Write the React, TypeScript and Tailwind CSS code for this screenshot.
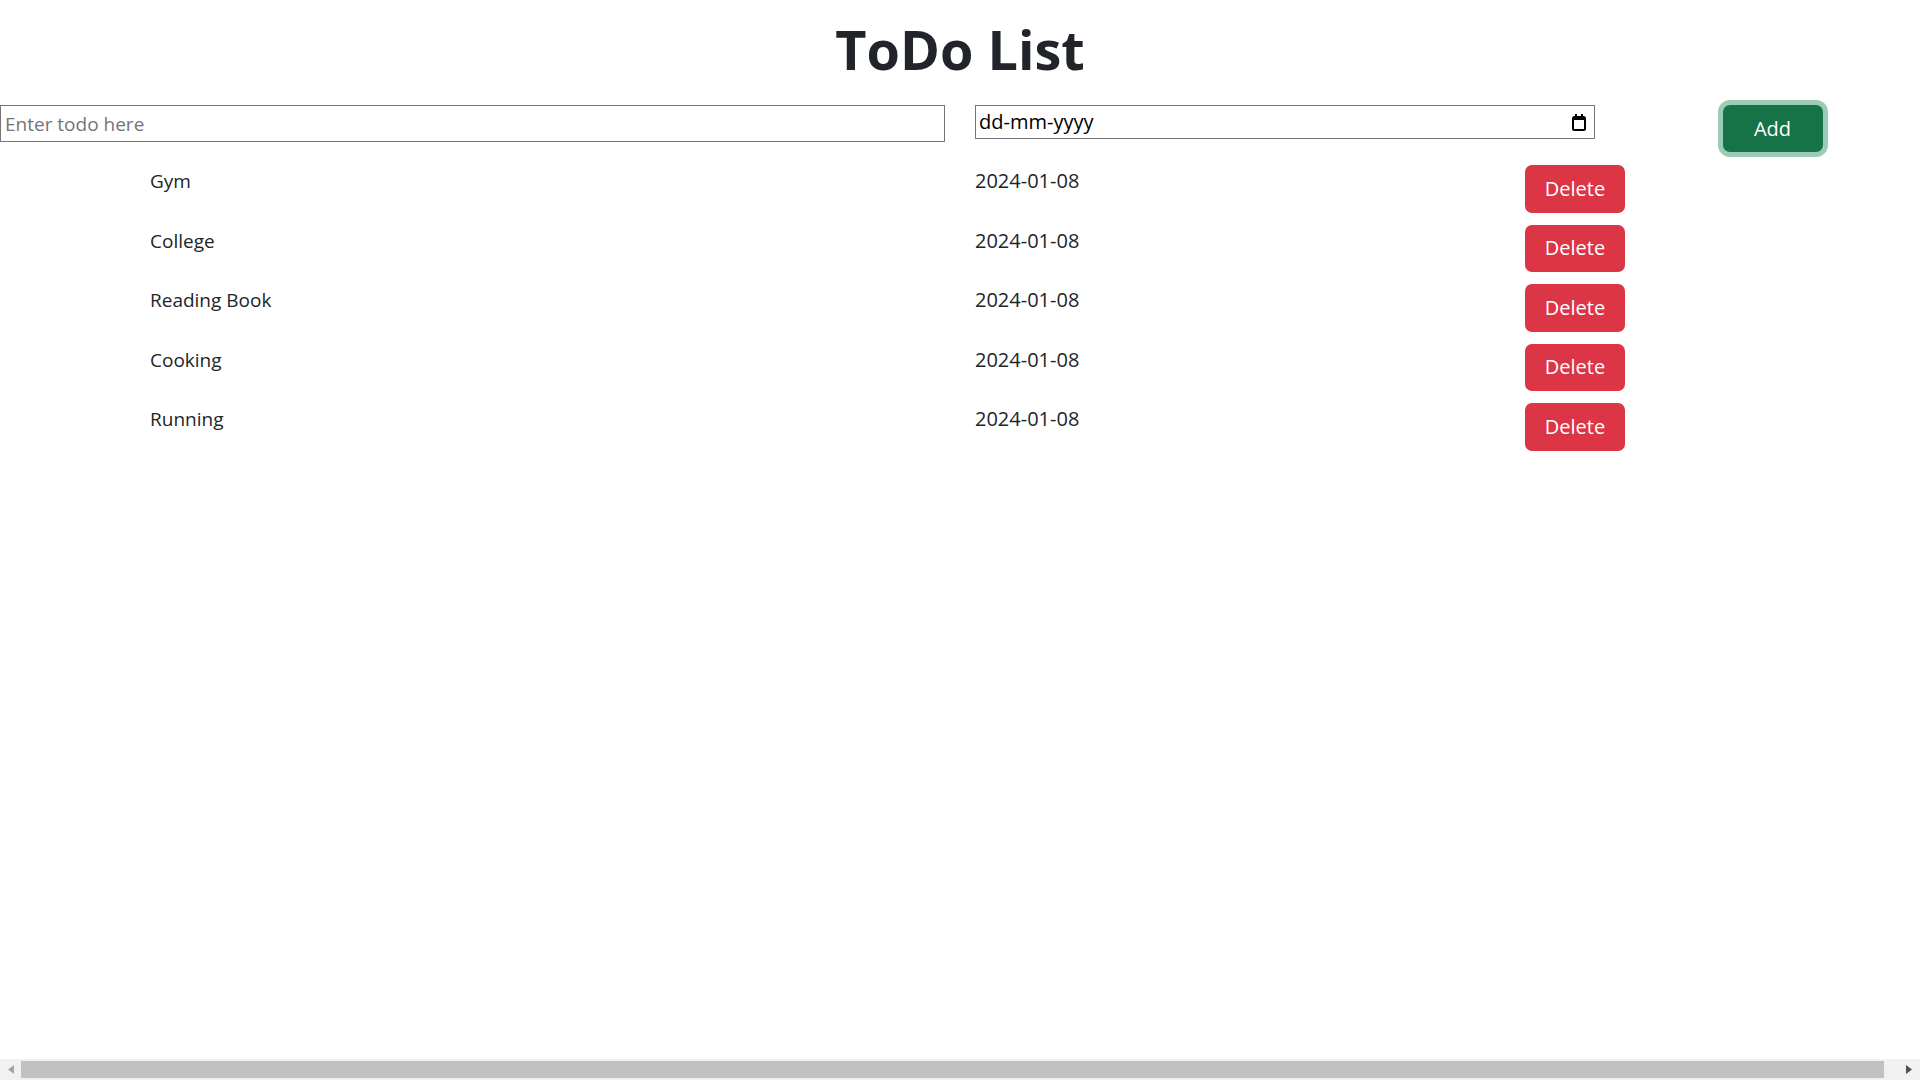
const todos = [
  { title: 'Gym', date: '2024-01-08' },
  { title: 'College', date: '2024-01-08' },
  { title: 'Reading Book', date: '2024-01-08' },
  { title: 'Cooking', date: '2024-01-08' },
  { title: 'Running', date: '2024-01-08' },
];

function CalendarIcon() {
  return (
    <svg width="14" height="17" viewBox="0 0 14 17" className="shrink-0">
      <rect x="3" y="0" width="2" height="3" fill="#000" />
      <rect x="9" y="0" width="2" height="3" fill="#000" />
      <rect x="1" y="3" width="12" height="13" rx="1.5" fill="none" stroke="#000" strokeWidth="2" />
      <rect x="1" y="3" width="12" height="3" fill="#000" />
    </svg>
  );
}

// the browser's horizontal scrollbar (page is a bit wider than the window)
function ScrollBar() {
  return (
    <div className="fixed bottom-0 left-0 right-0 h-[21px] bg-[#f1f1f1] flex items-center">
      <div className="w-[21px] h-full flex items-center justify-center">
        <svg width="6" height="9" viewBox="0 0 6 9">
          <path d="M6 0 L0 4.5 L6 9 Z" fill="#a3a3a3" />
        </svg>
      </div>
      <div className="flex-1 h-[17px] bg-[#c1c1c1]" />
      <div className="w-[36px] h-full flex items-center justify-end pr-[8px]">
        <svg width="6" height="9" viewBox="0 0 6 9">
          <path d="M0 0 L6 4.5 L0 9 Z" fill="#505050" />
        </svg>
      </div>
    </div>
  );
}

export default function App() {
  return (
    <div className="w-[1920px] min-h-screen bg-white text-[#212529] font-['Open_Sans',sans-serif] text-[20px] leading-[30px]">
      {/* Heading */}
      <h1 className="pt-[17px] pb-[23px] text-center text-[54px] leading-[65px] font-bold">ToDo List</h1>

      {/* Add form */}
      <div className="flex items-start w-[1935px]">
        <input
          type="text"
          placeholder="Enter todo here"
          className="w-[945px] h-[37px] px-[4px] border border-[#767676] text-[19px] placeholder:text-[#757575] outline-none"
        />
        <div className="ml-[30px] w-[620px] h-[34px] flex items-center justify-between pl-[3px] pr-[8px] border border-[#767676] text-black">
          <span className="leading-none">dd-mm-yyyy</span>
          <CalendarIcon />
        </div>
        <div className="flex justify-center w-[340px] pl-[30px] pr-[15px]">
          <button className="w-[100px] h-[47px] rounded-[7px] bg-[#157347] text-white ring-[5px] ring-[#9dccb6]">
            Add
          </button>
        </div>
      </div>

      {/* Todo items */}
      <div className="flex flex-col gap-[12px] mt-[13px] w-[1935px]">
        {todos.map((todo) => (
          <div key={todo.title} className="flex items-start">
            <div className="w-[975px] pl-[150px] pt-[1px] text-[19px]">{todo.title}</div>
            <div className="w-[550px] pt-[1px]">{todo.date}</div>
            <button className="w-[100px] h-[47.5px] rounded-[7px] bg-[#dc3545] text-white">Delete</button>
          </div>
        ))}
      </div>

      <ScrollBar />
    </div>
  );
}
